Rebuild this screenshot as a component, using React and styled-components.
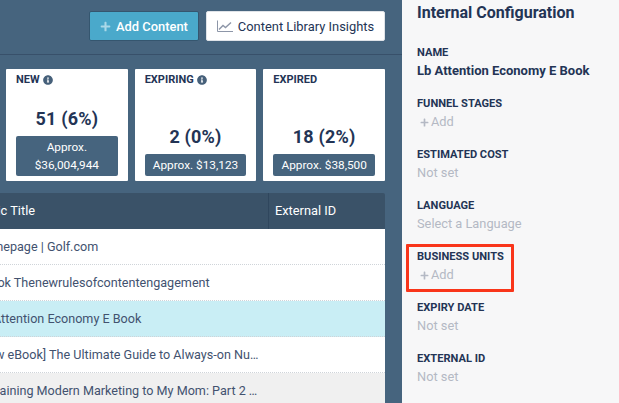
import React from 'react'
import styled, { createGlobalStyle } from 'styled-components'
import { FaInfoCircle, FaPlus } from 'react-icons/fa'

const GlobalStyle = createGlobalStyle`
  html, body {
    margin: 0;
    height: 100%;
    overflow: hidden;
  }
  body {
    font-family: Roboto, "Liberation Sans", sans-serif;
    color: #233455;
  }
`

const Page = styled.div`
  display: flex;
  width: 619px;
  height: 403px;
  overflow: hidden;
`

const Main = styled.main`
  width: 402px;
  flex: none;
  background: #46647e;
  overflow: hidden;
  display: flex;
  flex-direction: column;
`

const Toolbar = styled.div`
  height: 55px;
  box-sizing: border-box;
  flex: none;
  border-bottom: 1px solid #38506a;
  padding: 11px 17px 0 0;
  display: flex;
  justify-content: flex-end;
  align-items: flex-start;
  gap: 7px;
`

const Button = styled.button`
  height: 30px;
  box-sizing: border-box;
  border-radius: 2px;
  font-family: inherit;
  font-size: 12.9px;
  display: flex;
  align-items: center;
  padding: 0;
`

const AddButton = styled(Button)`
  width: 110px;
  justify-content: center;
  gap: 5px;
  background: #4aa9cb;
  border: 1px solid #35566f;
  color: #fff;
  font-weight: 500;
  svg {
    color: #a9d8e8;
    width: 11px;
    height: 11px;
  }
`

const InsightsButton = styled(Button)`
  width: 179px;
  justify-content: center;
  gap: 5px;
  background: #fff;
  border: 1px solid #dfe3e8;
  color: #233455;
`

const Cards = styled.div`
  display: flex;
  gap: 7px;
  padding: 14px 17px 0 6px;
  flex: none;
`

const Card = styled.section`
  flex: 1;
  height: 112px;
  box-sizing: border-box;
  background: #fff;
  border-radius: 1px;
  padding: 0 10px 5px;
  display: flex;
  flex-direction: column;
`

const CardLabel = styled.div`
  font-size: 11px;
  font-weight: 700;
  line-height: 14px;
  margin-top: 4px;
  display: flex;
  align-items: center;
  gap: 3px;
  svg {
    width: 10px;
    height: 10px;
    color: #46607a;
  }
`

const CardValue = styled.div`
  margin-top: auto;
  text-align: center;
  font-size: 18px;
  font-weight: 700;
  line-height: 22px;
  letter-spacing: 0.2px;
  margin-bottom: 6px;
`

const Approx = styled.div`
  background: #46647e;
  color: #fff;
  border-radius: 2px;
  text-align: center;
  font-size: 11.8px;
  line-height: 18px;
  padding: 2px 0;
`

const Table = styled.div`
  margin: 12px 17px 0 -30px;
  flex: none;
  border-radius: 2px;
  overflow: hidden;
`

const HeaderRow = styled.div`
  display: grid;
  grid-template-columns: 298px 1fr;
  height: 36px;
  background: #3a5268;
  color: #fff;
  font-size: 12.8px;
  line-height: 35px;
`

const HeaderCell = styled.div`
  padding-left: 6px;
  & + & {
    border-left: 1px solid #2f465d;
  }
`

const Row = styled.div`
  height: 36px;
  box-sizing: border-box;
  padding-left: 6px;
  padding-right: 123px;
  font-size: 12.6px;
  line-height: 36px;
  color: #42526f;
  background: ${(p) => p.$bg};
  border-bottom: 1px dotted #cfd4d9;
  white-space: nowrap;
  overflow: hidden;
  text-overflow: ellipsis;
`

const Panel = styled.aside`
  flex: 1;
  background: #f7f7f8;
  padding-left: 15px;
  overflow: hidden;
`

const PanelTitle = styled.h2`
  margin: 3px 0 0;
  font-size: 16px;
  font-weight: 700;
  line-height: 20px;
  color: #233455;
`

const Fields = styled.div`
  margin-top: 21px;
  display: flex;
  flex-direction: column;
  gap: 15px;
`

const Field = styled.div`
  position: relative;
  height: 36px;
`

const FieldLabel = styled.div`
  font-size: 11.1px;
  font-weight: 700;
  line-height: 18px;
  text-transform: uppercase;
`

const FieldValue = styled.div`
  font-size: ${(p) => (p.$strong ? '13px' : '12.8px')};
  line-height: 18px;
  font-weight: ${(p) => (p.$strong ? 700 : 400)};
  color: ${(p) => (p.$strong ? '#233455' : '#b4b9c4')};
`

const AddLink = styled(FieldValue)`
  display: flex;
  align-items: center;
  gap: 2px;
  padding-left: 3px;
  svg {
    width: 9px;
    height: 9px;
    color: #b4b9c4;
  }
`

const Highlight = styled.div`
  position: absolute;
  left: -11px;
  top: -4px;
  width: 108px;
  height: 48px;
  box-sizing: border-box;
  border: 3px solid #f9351a;
  border-radius: 1px;
`

const ChartIcon = () => (
  <svg width="16" height="12" viewBox="0 0 16 12" fill="none" stroke="#8d96a8" strokeWidth="1">
    <path d="M0.5 0.5V11.5H16" />
    <path d="M2 9.5L6 5.5L8.5 7.5L14 2.5" strokeWidth="1.4" />
  </svg>
)

const cards = [
  { label: 'NEW', info: true, value: '51 (6%)', approx: ['Approx.', '$36,004,944'] },
  { label: 'EXPIRING', info: true, value: '2 (0%)', approx: ['Approx. $13,123'] },
  { label: 'EXPIRED', value: '18 (2%)', approx: ['Approx. $38,500'] },
]

const rows = [
  { title: 'Homepage | Golf.com', bg: '#fff' },
  { title: 'Ebook Thenewrulesofcontentengagement', bg: '#fff' },
  { title: 'Lb Attention Economy E Book', bg: '#c9eef5' },
  { title: '[New eBook] The Ultimate Guide to Always-on Nurture Programs', bg: '#fff' },
  { title: 'Explaining Modern Marketing to My Mom: Part 2 of a Series on Content', bg: '#f0f0f0' },
]

const fields = [
  { label: 'Name', value: 'Lb Attention Economy E Book', strong: true },
  { label: 'Funnel Stages', add: true },
  { label: 'Estimated Cost', value: 'Not set' },
  { label: 'Language', value: 'Select a Language' },
  { label: 'Business Units', add: true, marked: true },
  { label: 'Expiry Date', value: 'Not set' },
  { label: 'External ID', value: 'Not set' },
]

export default function App() {
  return (
    <Page>
      <GlobalStyle />
      <Main>
        <Toolbar>
          <AddButton><FaPlus />Add Content</AddButton>
          <InsightsButton><ChartIcon />Content Library Insights</InsightsButton>
        </Toolbar>
        <Cards>
          {cards.map((c) => (
            <Card key={c.label}>
              <CardLabel>{c.label}{c.info && <FaInfoCircle />}</CardLabel>
              <CardValue>{c.value}</CardValue>
              <Approx>{c.approx.map((line) => <div key={line}>{line}</div>)}</Approx>
            </Card>
          ))}
        </Cards>
        <Table>
          <HeaderRow>
            <HeaderCell>Topic Title</HeaderCell>
            <HeaderCell>External ID</HeaderCell>
          </HeaderRow>
          {rows.map((r) => <Row key={r.title} $bg={r.bg}>{r.title}</Row>)}
        </Table>
      </Main>
      <Panel>
        <PanelTitle>Internal Configuration</PanelTitle>
        <Fields>
          {fields.map((f) => (
            <Field key={f.label}>
              <FieldLabel>{f.label}</FieldLabel>
              {f.add
                ? <AddLink><FaPlus />Add</AddLink>
                : <FieldValue $strong={f.strong}>{f.value}</FieldValue>}
              {f.marked && <Highlight />}
            </Field>
          ))}
        </Fields>
      </Panel>
    </Page>
  )
}
